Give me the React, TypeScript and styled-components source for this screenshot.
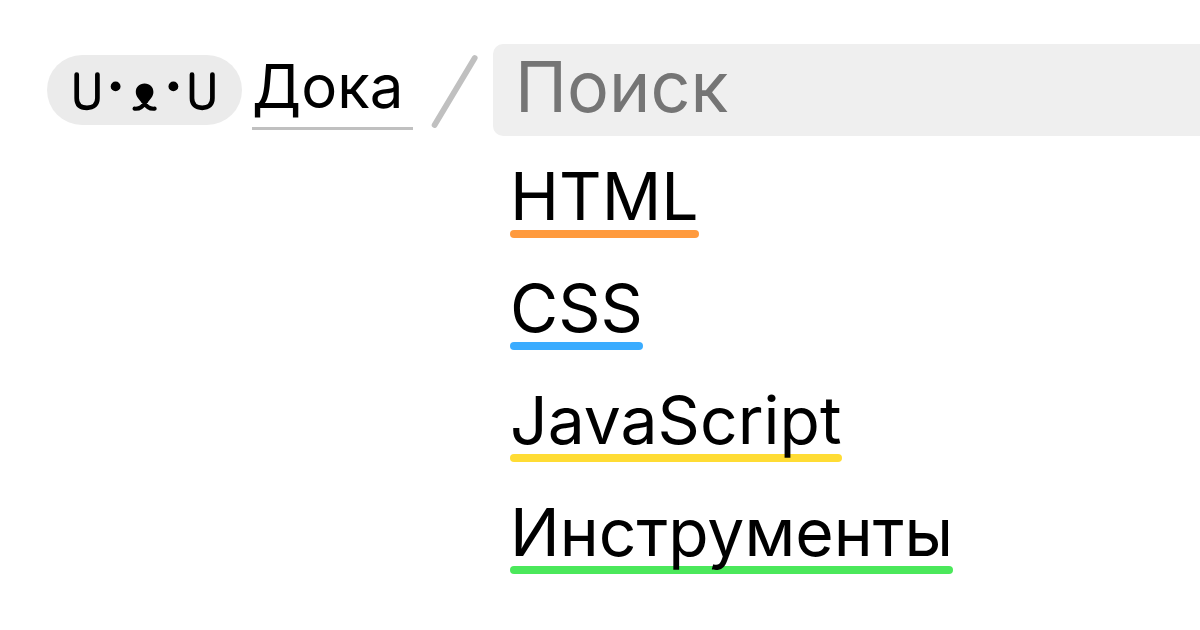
import React from "react";
import styled, { createGlobalStyle } from "styled-components";

const GlobalStyle = createGlobalStyle`
  *, *::before, *::after {
    box-sizing: border-box;
  }
  body {
    margin: 0;
    background: #fff;
    color: #000;
    font-family: Inter, "Liberation Sans", sans-serif;
    overflow-x: hidden;
  }
`;

const Page = styled.div`
  display: grid;
  grid-template-columns: 446px minmax(0, 1fr);
  row-gap: 20px;
  padding: 44px 0 48px 47px;
`;

const Brand = styled.div`
  display: flex;
  align-items: center;
`;

const LogoLink = styled.a`
  display: flex;
  width: 195px;
  height: 70px;
  border-radius: 35px;
  background: #ebebeb;
`;

const BrandName = styled.a`
  width: 161px;
  height: 80px;
  margin-left: 10px;
  border-bottom: 3px solid #c0c0c0;
  color: #000;
  font-size: 60px;
  line-height: 72px;
  text-decoration: none;
  white-space: nowrap;
`;

const Divider = styled.svg`
  display: block;
  margin-left: 18px;
`;

const SearchInput = styled.input`
  display: block;
  width: 100%;
  height: 92px;
  padding: 0 16px 8px 22px;
  border: 0;
  border-radius: 10px 0 0 10px;
  background: #efefef;
  color: #000;
  font-family: inherit;
  font-size: 70px;
  outline: none;

  &::placeholder {
    color: #757575;
    opacity: 1;
  }
`;

const Sections = styled.nav`
  grid-column: 2;
  padding-left: 17px;
`;

const SectionList = styled.ul`
  display: flex;
  flex-direction: column;
  align-items: flex-start;
  gap: 30px;
  margin: 0;
  padding: 0;
  list-style: none;
`;

const SectionLink = styled.a<{ $accent: string }>`
  display: flex;
  flex-direction: column;
  isolation: isolate;
  color: #000;
  font-size: 66px;
  line-height: 80px;
  text-decoration: none;

  &::after {
    content: "";
    z-index: -1;
    height: 8px;
    margin-top: -6px;
    border-radius: 4px;
    background: ${(p) => p.$accent};
  }
`;

const sections = [
  { title: "HTML", accent: "#ff9a3d" },
  { title: "CSS", accent: "#3aacff" },
  { title: "JavaScript", accent: "#ffdc34" },
  { title: "Инструменты", accent: "#4be85b" },
];

function DogFace() {
  return (
    <svg width="195" height="70" viewBox="0 0 195 70" fill="none" aria-hidden="true">
      <g stroke="#000" strokeWidth="4.7" strokeLinecap="round" strokeLinejoin="round">
        <path d="M29.7 19.6V43.2C29.7 49.5 33.4 52.8 40 52.8S50.4 49.5 50.4 43.2V19.6" />
        <path d="M145 19.6V43.2C145 49.5 148.8 52.8 155.2 52.8S165.4 49.5 165.4 43.2V19.6" />
        <path strokeWidth="4.2" d="M87.6 53.7C93 54.2 95.6 51.8 98.6 46.6M107.6 53.7C102.2 54.2 99.6 51.8 96.6 46.6" />
      </g>
      <g fill="#000">
        <circle cx="68.6" cy="31.4" r="4.9" />
        <circle cx="126.4" cy="31.4" r="4.9" />
        <path d="M97.6 28.6C103 28.6 106.4 32.2 106.4 37C106.4 41.8 102.6 44.4 100.4 48H94.8C92.6 44.4 88.8 41.8 88.8 37C88.8 32.2 92.2 28.6 97.6 28.6Z" />
      </g>
    </svg>
  );
}

export default function App() {
  return (
    <>
      <GlobalStyle />
      <Page>
        <Brand>
          <LogoLink href="#" aria-label="Дока">
            <DogFace />
          </LogoLink>
          <BrandName href="#">Дока</BrandName>
          <Divider width="48" height="76" viewBox="0 0 48 76" aria-hidden="true">
            <path d="M3.6 73L43.7 6" stroke="#c0c0c0" strokeWidth="5.8" strokeLinecap="round" />
          </Divider>
        </Brand>
        <SearchInput type="search" placeholder="Поиск" aria-label="Поиск" />
        <Sections aria-label="Разделы">
          <SectionList>
            {sections.map((s) => (
              <li key={s.title}>
                <SectionLink href="#" $accent={s.accent}>
                  {s.title}
                </SectionLink>
              </li>
            ))}
          </SectionList>
        </Sections>
      </Page>
    </>
  );
}
